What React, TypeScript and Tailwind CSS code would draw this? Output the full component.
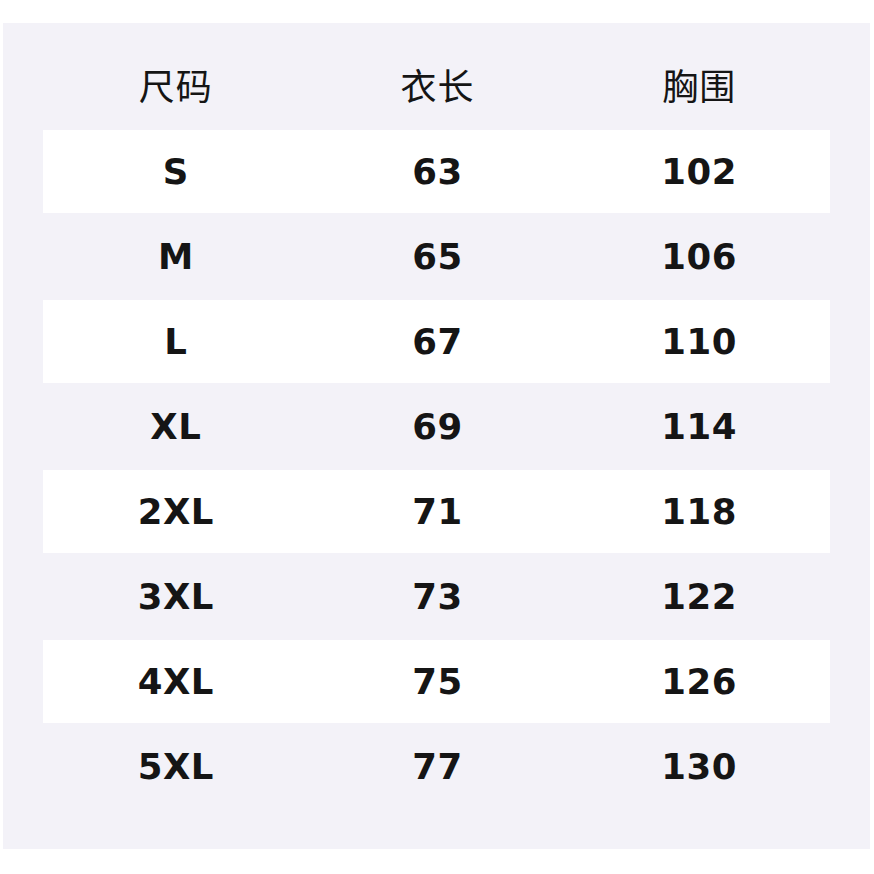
const rows = [
  ["S", "63", "102"],
  ["M", "65", "106"],
  ["L", "67", "110"],
  ["XL", "69", "114"],
  ["2XL", "71", "118"],
  ["3XL", "73", "122"],
  ["4XL", "75", "126"],
  ["5XL", "77", "130"],
];

export default function App() {
  return (
    <div className="w-[874px] h-[874px] bg-white pt-[23px] pl-[3px]">
      <div className="w-[867px] h-[826px] bg-[#f3f2f8] px-[40px] pt-[21px] pb-[40px]">
        {/* header */}
        <div
          className="grid grid-cols-3 h-[85px] pb-[6px] pl-[2px] items-center text-center text-[36px] tracking-[1px] text-[#151515]"
          style={{ fontFamily: '"Noto Sans CJK SC", "Noto Sans", sans-serif' }}
        >
          <span>尺码</span>
          <span>衣长</span>
          <span>胸围</span>
        </div>

        {rows.map((r, i) => (
          <div key={r[0]} className="h-[85px] py-[1px]">
            <div
              className={`grid grid-cols-3 h-full pl-[2px] items-center text-center text-[35.5px] font-bold tracking-[0.5px] text-[#151515] ${
                i % 2 === 0 ? "bg-white" : ""
              }`}
              style={{ fontFamily: '"DejaVu Sans", sans-serif' }}
            >
              {r.map((c, j) => (
                <span key={j}>{c}</span>
              ))}
            </div>
          </div>
        ))}
      </div>
    </div>
  );
}
